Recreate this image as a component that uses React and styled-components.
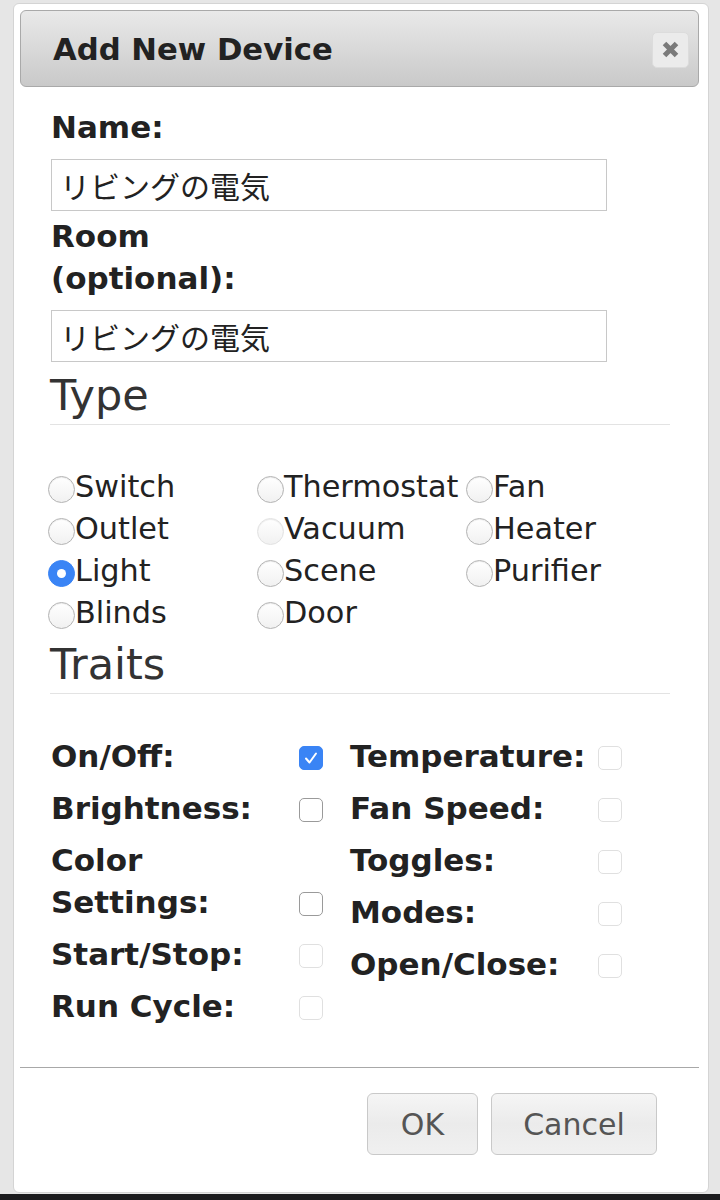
import React from 'react';
import styled, { createGlobalStyle } from 'styled-components';

const GlobalStyle = createGlobalStyle`
  html, body {
    margin: 0;
    padding: 0;
    background: #e6e6e6;
  }
  body {
    font-family: "DejaVu Sans", Verdana, sans-serif;
    color: #222;
  }
  * {
    box-sizing: border-box;
  }
`;

const Screen = styled.div`
  display: flex;
  flex-direction: column;
  width: 720px;
  height: 1200px;
`;

const Stage = styled.div`
  flex: 1;
  padding: 3px 0 0 13px;
  background: #e6e6e6;
`;

const Strip = styled.div`
  height: 6px;
  background: #1c1c1e;
`;

const Dialog = styled.div`
  display: flex;
  flex-direction: column;
  width: 696px;
  height: 1190px;
  padding: 6px 9px 6px 6px;
  background: #fff;
  border: 1px solid #d4d4d4;
  border-radius: 6px;
`;

const TitleBar = styled.div`
  display: flex;
  align-items: center;
  justify-content: space-between;
  height: 77px;
  padding: 2px 9px 0 32px;
  border: 1px solid #a9a9a9;
  border-radius: 6px;
  background: linear-gradient(#e9e9e9, #c9c9c9);
`;

const Title = styled.h1`
  margin: 0;
  font-size: 30.7px;
  font-weight: bold;
  color: #222;
`;

const CloseButton = styled.button`
  display: flex;
  align-items: center;
  justify-content: center;
  width: 37px;
  height: 36px;
  padding: 0;
  border: 1px solid #dcdcdc;
  border-radius: 5px;
  background: #ebebeb;
  color: #777;
`;

const Body = styled.div`
  padding: 19px 0 0 31px;
`;

const FieldLabel = styled.label`
  display: block;
  width: 250px;
  margin-bottom: 11px;
  font-size: 31px;
  font-weight: bold;
  line-height: 42px;
  color: #222;
`;

const TextInput = styled.input`
  display: block;
  width: 556px;
  height: 52px;
  margin: 0 0 4px;
  padding: 0 8px;
  border: 1px solid #c8c8c8;
  border-radius: 0;
  font-family: "DejaVu Sans", "Noto Sans CJK JP", sans-serif;
  font-size: 30px;
  color: #222;
  background: #fff;
  outline: none;
`;

const Legend = styled.h2`
  width: 620px;
  margin: ${({ $top }) => $top}px 0 0 -1px;
  padding-bottom: 5px;
  border-bottom: 1px solid #e3e3e3;
  font-size: 43px;
  font-weight: normal;
  line-height: 48px;
  color: #333;
`;

const RadioGrid = styled.div`
  display: grid;
  grid-template-columns: repeat(3, 209px);
  margin: 41px 0 0 -3px;
`;

const RadioItem = styled.label`
  display: flex;
  align-items: center;
  height: 42px;
  font-size: 30.3px;
  line-height: 42px;
  color: #222;
  white-space: nowrap;
`;

const RadioDot = styled.span`
  flex: none;
  display: flex;
  align-items: center;
  justify-content: center;
  width: 27px;
  height: 27px;
  margin-top: 4px;
  border-radius: 50%;
  border: 1px solid ${({ $checked, $disabled }) => ($checked ? '#3a84f5' : $disabled ? '#e2e2e2' : '#b3b3b3')};
  background: ${({ $checked }) => ($checked ? '#3a84f5' : 'linear-gradient(#ffffff, #f1f1f1)')};
  box-shadow: ${({ $checked }) => ($checked ? 'none' : 'inset 0 1px 1px rgba(0,0,0,0.08)')};

  &::after {
    content: '';
    display: ${({ $checked }) => ($checked ? 'block' : 'none')};
    width: 9px;
    height: 9px;
    border-radius: 50%;
    background: #fff;
  }
`;

const Traits = styled.div`
  display: flex;
  gap: 27px;
  margin-top: 36px;
`;

const TraitColumn = styled.div`
  display: flex;
  flex-direction: column;
`;

const TraitRow = styled.div`
  display: flex;
  align-items: flex-end;
  padding: 5px 0;
`;

const TraitLabel = styled.span`
  width: 248px;
  font-size: 31px;
  font-weight: bold;
  line-height: 42px;
  color: #222;
`;

const CheckBox = styled.span`
  flex: none;
  display: flex;
  align-items: center;
  justify-content: center;
  width: 24px;
  height: 24px;
  margin-bottom: 7px;
  border-radius: 5px;
  border: ${({ $checked, $disabled }) =>
    $checked ? '1px solid #3a84f5' : $disabled ? '1.5px solid #e0e0e0' : '1.5px solid #9a9a9a'};
  background: ${({ $checked }) => ($checked ? '#3a84f5' : '#fff')};
`;

const Footer = styled.div`
  display: flex;
  justify-content: flex-end;
  gap: 13px;
  margin-top: auto;
  padding: 25px 42px 31px 0;
  border-top: 1.5px solid #a8a8a8;
`;

const Button = styled.button`
  width: ${({ $w }) => $w}px;
  height: 62px;
  padding: 0;
  border: 1px solid #c9c9c9;
  border-radius: 6px;
  background: linear-gradient(#f5f5f5, #ebebeb 50%, #f0f0f0);
  font-family: "DejaVu Sans", Verdana, sans-serif;
  font-size: 30px;
  color: #555;
`;

const types = [
  ['Switch', 'Thermostat', 'Fan'],
  ['Outlet', 'Vacuum', 'Heater'],
  ['Light', 'Scene', 'Purifier'],
  ['Blinds', 'Door', null],
];

const leftTraits = [
  { label: 'On/Off:', checked: true },
  { label: 'Brightness:' },
  { label: 'Color Settings:' },
  { label: 'Start/Stop:', disabled: true },
  { label: 'Run Cycle:', disabled: true },
];

const rightTraits = [
  { label: 'Temperature:', disabled: true },
  { label: 'Fan Speed:', disabled: true },
  { label: 'Toggles:', disabled: true },
  { label: 'Modes:', disabled: true },
  { label: 'Open/Close:', disabled: true },
];

const CloseIcon = () => (
  <svg width="19" height="19" viewBox="0 0 19 19">
    <path d="M3.5 3.5 L15.5 15.5 M15.5 3.5 L3.5 15.5" stroke="#7a7a7a" strokeWidth="5" />
  </svg>
);

const Tick = () => (
  <svg width="18" height="18" viewBox="0 0 18 18">
    <path d="M4 9.5 L7.5 13.5 L14 4.5" fill="none" stroke="#fff" strokeWidth="2" strokeLinecap="round" strokeLinejoin="round" />
  </svg>
);

const TraitList = ({ items }) => (
  <TraitColumn>
    {items.map((t) => (
      <TraitRow key={t.label}>
        <TraitLabel>{t.label}</TraitLabel>
        <CheckBox $checked={t.checked} $disabled={t.disabled}>
          {t.checked && <Tick />}
        </CheckBox>
      </TraitRow>
    ))}
  </TraitColumn>
);

export default function App() {
  return (
    <Screen>
      <GlobalStyle />
      <Stage>
        <Dialog>
          <TitleBar>
            <Title>Add New Device</Title>
            <CloseButton aria-label="close">
              <CloseIcon />
            </CloseButton>
          </TitleBar>

          <Body>
            <FieldLabel>Name:</FieldLabel>
            <TextInput defaultValue="リビングの電気" />
            <FieldLabel>Room (optional):</FieldLabel>
            <TextInput defaultValue="リビングの電気" />

            <Legend $top={9}>Type</Legend>
            <RadioGrid>
              {types.flat().map((name, i) =>
                name ? (
                  <RadioItem key={name}>
                    <RadioDot $checked={name === 'Light'} $disabled={name === 'Vacuum'} />
                    {name}
                  </RadioItem>
                ) : (
                  <span key={`empty-${i}`} />
                )
              )}
            </RadioGrid>

            <Legend $top={6}>Traits</Legend>
            <Traits>
              <TraitList items={leftTraits} />
              <TraitList items={rightTraits} />
            </Traits>
          </Body>

          <Footer>
            <Button $w={111}>OK</Button>
            <Button $w={166}>Cancel</Button>
          </Footer>
        </Dialog>
      </Stage>
      <Strip />
    </Screen>
  );
}
